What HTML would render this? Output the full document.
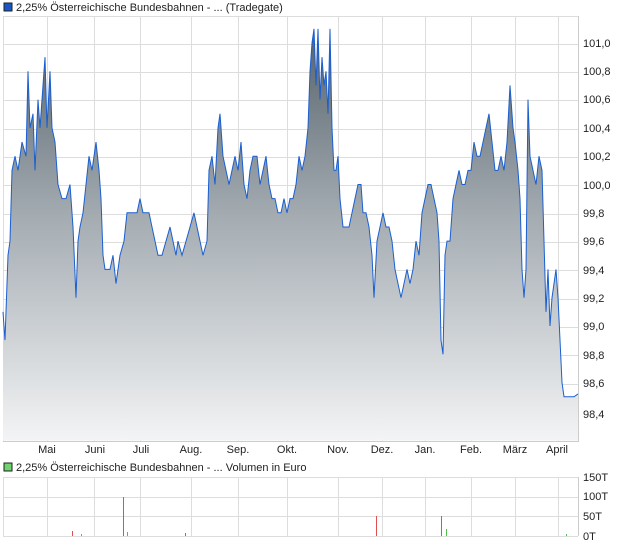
<!DOCTYPE html>
<html><head><meta charset="utf-8"><style>
html,body{margin:0;padding:0;background:#fff;width:620px;height:546px;overflow:hidden}
svg{display:block}
text{font-family:"Liberation Sans",sans-serif;font-size:11px;fill:#222}
</style></head><body>
<svg width="620" height="546" viewBox="0 0 620 546">
<defs>
<linearGradient id="g" gradientUnits="userSpaceOnUse" x1="0" y1="101.1" x2="0" y2="98.19">
<stop offset="0" stop-color="#55616a"/><stop offset="0.45" stop-color="#a3abb1"/><stop offset="1" stop-color="#f3f4f5"/></linearGradient>
</defs>
<rect x="4" y="3" width="8" height="8" fill="#1a56c4" stroke="#222" stroke-width="1"/>
<text x="16" y="11">2,25% Österreichische Bundesbahnen - ... (Tradegate)</text>
<g stroke="#ddd" stroke-width="1">
<line x1="3" y1="16.5" x2="578" y2="16.5"/>
<line x1="3" y1="44.5" x2="578" y2="44.5"/><line x1="3" y1="72.5" x2="578" y2="72.5"/><line x1="3" y1="100.5" x2="578" y2="100.5"/><line x1="3" y1="129.5" x2="578" y2="129.5"/><line x1="3" y1="157.5" x2="578" y2="157.5"/><line x1="3" y1="185.5" x2="578" y2="185.5"/><line x1="3" y1="214.5" x2="578" y2="214.5"/><line x1="3" y1="242.5" x2="578" y2="242.5"/><line x1="3" y1="270.5" x2="578" y2="270.5"/><line x1="3" y1="299.5" x2="578" y2="299.5"/><line x1="3" y1="327.5" x2="578" y2="327.5"/><line x1="3" y1="355.5" x2="578" y2="355.5"/><line x1="3" y1="384.5" x2="578" y2="384.5"/><line x1="3" y1="412.5" x2="578" y2="412.5"/>
<line x1="3.5" y1="16" x2="3.5" y2="441"/>
<line x1="47.5" y1="16" x2="47.5" y2="441"/><line x1="94.5" y1="16" x2="94.5" y2="441"/><line x1="140.5" y1="16" x2="140.5" y2="441"/><line x1="191.5" y1="16" x2="191.5" y2="441"/><line x1="238.5" y1="16" x2="238.5" y2="441"/><line x1="287.5" y1="16" x2="287.5" y2="441"/><line x1="338.5" y1="16" x2="338.5" y2="441"/><line x1="382.5" y1="16" x2="382.5" y2="441"/><line x1="425.5" y1="16" x2="425.5" y2="441"/><line x1="471.5" y1="16" x2="471.5" y2="441"/><line x1="515.5" y1="16" x2="515.5" y2="441"/><line x1="558.5" y1="16" x2="558.5" y2="441"/>
</g>
<g transform="matrix(1 0 0 -141.5 0 14334.5)">
<polygon fill="url(#g)" points="3,99.1 5,98.9 8,99.5 10,99.6 12,100.1 15,100.2 18,100.1 22,100.3 26,100.2 28,100.8 30,100.4 33,100.5 35,100.1 38,100.6 40,100.4 43,100.7 45,100.9 47,100.4 50,100.8 52,100.4 55,100.3 58,100 62,99.9 66,99.9 70,100 73,99.7 76,99.2 78,99.6 80,99.7 83,99.8 86,100 89,100.2 92,100.1 96,100.3 99,100.1 101,99.9 103,99.5 105,99.4 110,99.4 113,99.5 116,99.3 120,99.5 124,99.6 127,99.8 132,99.8 137,99.8 140,99.9 143,99.8 146,99.8 149,99.8 152,99.7 155,99.6 158,99.5 162,99.5 166,99.6 170,99.7 173,99.6 176,99.5 178,99.6 182,99.5 186,99.6 190,99.7 194,99.8 197,99.7 200,99.6 203,99.5 207,99.6 209,100.1 212,100.2 215,100 218,100.4 220,100.5 223,100.2 226,100.1 229,100 232,100.1 235,100.2 238,100.1 241,100.3 244,100 247,99.9 250,100.1 253,100.2 257,100.2 260,100 263,100.1 266,100.2 269,100 272,99.9 275,99.9 278,99.8 281,99.8 284,99.9 287,99.8 290,99.9 293,99.9 296,100 299,100.2 302,100.1 305,100.2 308,100.4 310,100.8 312,101 314,101.1 316,100.7 318,101.1 320,100.6 322,100.9 324,100.7 326,100.8 328,100.5 330,101.1 332,100.4 334,100.1 336,100.1 338,100.2 340,99.9 343,99.7 346,99.7 349,99.7 352,99.8 355,99.9 358,100 361,100 363,99.8 366,99.8 369,99.7 372,99.5 374,99.2 377,99.6 380,99.7 383,99.8 386,99.7 389,99.7 392,99.6 395,99.4 398,99.3 401,99.2 404,99.3 407,99.4 410,99.3 413,99.4 416,99.6 419,99.5 422,99.8 425,99.9 428,100 431,100 434,99.9 437,99.8 439,99.6 441,98.9 443,98.8 445,99.5 447,99.6 450,99.6 453,99.9 456,100 459,100.1 462,100 465,100 468,100.1 471,100.1 474,100.3 477,100.2 480,100.2 483,100.3 486,100.4 489,100.5 492,100.3 495,100.1 498,100.1 501,100.2 504,100.1 507,100.3 510,100.7 513,100.4 515,100.3 518,100.1 520,99.9 522,99.4 524,99.2 526,99.4 528,100.6 530,100.2 533,100.1 536,100 539,100.2 542,100.1 544,99.6 546,99.1 548,99.4 550,99 552,99.2 554,99.3 556,99.4 558,99.2 560,98.9 562,98.6 564,98.5 566,98.5 570,98.5 574,98.5 578,98.52 578,98.19 3,98.19"/>
<polyline fill="none" stroke="#1a5fd0" stroke-width="1" vector-effect="non-scaling-stroke" points="3,99.1 5,98.9 8,99.5 10,99.6 12,100.1 15,100.2 18,100.1 22,100.3 26,100.2 28,100.8 30,100.4 33,100.5 35,100.1 38,100.6 40,100.4 43,100.7 45,100.9 47,100.4 50,100.8 52,100.4 55,100.3 58,100 62,99.9 66,99.9 70,100 73,99.7 76,99.2 78,99.6 80,99.7 83,99.8 86,100 89,100.2 92,100.1 96,100.3 99,100.1 101,99.9 103,99.5 105,99.4 110,99.4 113,99.5 116,99.3 120,99.5 124,99.6 127,99.8 132,99.8 137,99.8 140,99.9 143,99.8 146,99.8 149,99.8 152,99.7 155,99.6 158,99.5 162,99.5 166,99.6 170,99.7 173,99.6 176,99.5 178,99.6 182,99.5 186,99.6 190,99.7 194,99.8 197,99.7 200,99.6 203,99.5 207,99.6 209,100.1 212,100.2 215,100 218,100.4 220,100.5 223,100.2 226,100.1 229,100 232,100.1 235,100.2 238,100.1 241,100.3 244,100 247,99.9 250,100.1 253,100.2 257,100.2 260,100 263,100.1 266,100.2 269,100 272,99.9 275,99.9 278,99.8 281,99.8 284,99.9 287,99.8 290,99.9 293,99.9 296,100 299,100.2 302,100.1 305,100.2 308,100.4 310,100.8 312,101 314,101.1 316,100.7 318,101.1 320,100.6 322,100.9 324,100.7 326,100.8 328,100.5 330,101.1 332,100.4 334,100.1 336,100.1 338,100.2 340,99.9 343,99.7 346,99.7 349,99.7 352,99.8 355,99.9 358,100 361,100 363,99.8 366,99.8 369,99.7 372,99.5 374,99.2 377,99.6 380,99.7 383,99.8 386,99.7 389,99.7 392,99.6 395,99.4 398,99.3 401,99.2 404,99.3 407,99.4 410,99.3 413,99.4 416,99.6 419,99.5 422,99.8 425,99.9 428,100 431,100 434,99.9 437,99.8 439,99.6 441,98.9 443,98.8 445,99.5 447,99.6 450,99.6 453,99.9 456,100 459,100.1 462,100 465,100 468,100.1 471,100.1 474,100.3 477,100.2 480,100.2 483,100.3 486,100.4 489,100.5 492,100.3 495,100.1 498,100.1 501,100.2 504,100.1 507,100.3 510,100.7 513,100.4 515,100.3 518,100.1 520,99.9 522,99.4 524,99.2 526,99.4 528,100.6 530,100.2 533,100.1 536,100 539,100.2 542,100.1 544,99.6 546,99.1 548,99.4 550,99 552,99.2 554,99.3 556,99.4 558,99.2 560,98.9 562,98.6 564,98.5 566,98.5 570,98.5 574,98.5 578,98.52"/>
</g>
<line x1="578.5" y1="16" x2="578.5" y2="441" stroke="#ccc"/>
<line x1="3" y1="441.5" x2="579" y2="441.5" stroke="#ccc"/>
<g>
<text x="583" y="47">101,0</text><text x="583" y="75">100,8</text><text x="583" y="103">100,6</text><text x="583" y="132">100,4</text><text x="583" y="160">100,2</text><text x="583" y="189">100,0</text><text x="583" y="217">99,8</text><text x="583" y="245">99,6</text><text x="583" y="274">99,4</text><text x="583" y="302">99,2</text><text x="583" y="330">99,0</text><text x="583" y="359">98,8</text><text x="583" y="387">98,6</text><text x="583" y="418">98,4</text>
</g>
<g text-anchor="middle">
<text x="47" y="453">Mai</text><text x="95" y="453">Juni</text><text x="141" y="453">Juli</text><text x="191" y="453">Aug.</text><text x="238" y="453">Sep.</text><text x="287" y="453">Okt.</text><text x="338" y="453">Nov.</text><text x="382" y="453">Dez.</text><text x="425" y="453">Jan.</text><text x="471" y="453">Feb.</text><text x="515" y="453">März</text><text x="557" y="453">April</text>
</g>
<rect x="4" y="463" width="8" height="8" fill="#6fd36f" stroke="#222" stroke-width="1"/>
<text x="16" y="471">2,25% Österreichische Bundesbahnen - ... Volumen in Euro</text>
<g stroke="#ddd">
<line x1="3" y1="477.5" x2="578" y2="477.5"/><line x1="3" y1="497.5" x2="578" y2="497.5"/><line x1="3" y1="516.5" x2="578" y2="516.5"/><line x1="3" y1="536.5" x2="578" y2="536.5"/>
<line x1="3.5" y1="477" x2="3.5" y2="536"/><line x1="47.5" y1="477" x2="47.5" y2="536"/><line x1="94.5" y1="477" x2="94.5" y2="536"/><line x1="140.5" y1="477" x2="140.5" y2="536"/><line x1="191.5" y1="477" x2="191.5" y2="536"/><line x1="238.5" y1="477" x2="238.5" y2="536"/><line x1="287.5" y1="477" x2="287.5" y2="536"/><line x1="338.5" y1="477" x2="338.5" y2="536"/><line x1="382.5" y1="477" x2="382.5" y2="536"/><line x1="425.5" y1="477" x2="425.5" y2="536"/><line x1="471.5" y1="477" x2="471.5" y2="536"/><line x1="515.5" y1="477" x2="515.5" y2="536"/><line x1="558.5" y1="477" x2="558.5" y2="536"/>
<line x1="578.5" y1="477" x2="578.5" y2="536" stroke="#ccc"/>
</g>
<g stroke-width="1">
<line x1="72.5" y1="531" x2="72.5" y2="536" stroke="#e05050"/>
<line x1="81.5" y1="534" x2="81.5" y2="536" stroke="#50c050"/>
<line x1="123.5" y1="497" x2="123.5" y2="536" stroke="#e05050"/>
<line x1="127.5" y1="532" x2="127.5" y2="536" stroke="#50c050"/>
<line x1="185.5" y1="533" x2="185.5" y2="536" stroke="#e05050"/>
<line x1="376.5" y1="516" x2="376.5" y2="536" stroke="#e05050"/>
<line x1="441.5" y1="516" x2="441.5" y2="536" stroke="#e05050"/>
<line x1="446.5" y1="529" x2="446.5" y2="536" stroke="#50c050"/>
<line x1="566.5" y1="534" x2="566.5" y2="536" stroke="#50c050"/>
</g>
<text x="583" y="481">150T</text><text x="583" y="500">100T</text><text x="583" y="520">50T</text><text x="583" y="540">0T</text>
</svg>
</body></html>
